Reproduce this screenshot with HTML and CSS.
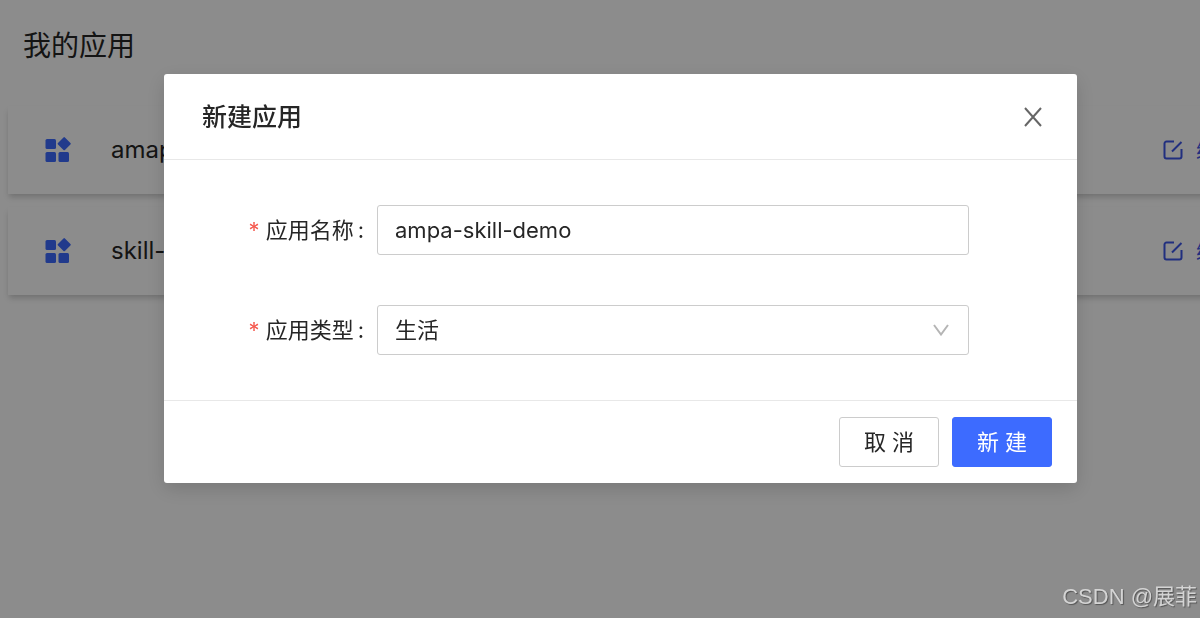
FILE: index.html
```html
<!DOCTYPE html>
<html lang="zh-CN">
<head>
<meta charset="utf-8">
<title>我的应用</title>
<link rel="stylesheet" href="styles.css">
</head>
<body>
<svg class="sprite" aria-hidden="true">
  <symbol id="icon-apps" viewBox="0 0 26 26">
    <rect x="0.500" y="2" width="10.500" height="10" rx="1.500"/>
    <rect x="0.500" y="15" width="10.500" height="10" rx="1.500"/>
    <rect x="13.500" y="15" width="10.500" height="10" rx="1.500"/>
    <rect x="14.300" y="1.800" width="9.800" height="9.800" rx="1" transform="rotate(45 19.200 6.700)"/>
  </symbol>
  <symbol id="icon-edit" viewBox="0 0 20 20">
    <path d="M11 1.500H3.500a2 2 0 0 0-2 2v13a2 2 0 0 0 2 2h13a2 2 0 0 0 2-2V9M9 11.500 18.500 2" fill="none" stroke="currentColor" stroke-width="2"/>
  </symbol>
</svg>
<main class="page">
  <h1 class="page-title">我的应用</h1>
  <ul class="app-list">
    <li class="app-card">
      <svg class="app-icon" aria-hidden="true"><use href="#icon-apps"/></svg>
      <span class="app-name">amap</span>
      <a class="edit-link" href="#"><svg class="edit-icon" aria-hidden="true"><use href="#icon-edit"/></svg>编辑</a>
    </li>
    <li class="app-card">
      <svg class="app-icon" aria-hidden="true"><use href="#icon-apps"/></svg>
      <span class="app-name">skill-</span>
      <a class="edit-link" href="#"><svg class="edit-icon" aria-hidden="true"><use href="#icon-edit"/></svg>编辑</a>
    </li>
  </ul>
</main>
<div class="overlay">
  <form class="modal" role="dialog" aria-labelledby="modal-title">
    <header class="modal-header">
      <h2 class="modal-title" id="modal-title">新建应用</h2>
      <button class="close" type="button" aria-label="关闭">
        <svg class="close-icon" viewBox="0 0 20 20" aria-hidden="true"><path d="M2 1 18 19M18 1 2 19"/></svg>
      </button>
    </header>
    <div class="modal-body">
      <div class="field">
        <label class="label" for="app-name"><span class="required">*</span>应用名称</label>
        <input class="control" id="app-name" type="text" value="ampa-skill-demo">
      </div>
      <div class="field">
        <label class="label" for="app-type"><span class="required">*</span>应用类型</label>
        <div class="select">
          <select class="control" id="app-type"><option>生活</option></select>
          <svg class="chevron" viewBox="0 0 16 12" aria-hidden="true"><path d="M1 1 8 10.500 15 1"/></svg>
        </div>
      </div>
    </div>
    <footer class="modal-footer">
      <button class="button" type="button">取 消</button>
      <button class="button primary" type="submit">新 建</button>
    </footer>
  </form>
</div>
<div class="watermark">CSDN @展菲</div>
</body>
</html>
```
FILE: styles.css
```css
* {
  box-sizing: border-box;
}

body {
  margin: 0;
  background: #fff;
  color: #262626;
  font: 22px/32px Inter, "Noto Sans CJK SC", sans-serif;
}

.sprite {
  display: none;
}

.page {
  min-height: 100vh;
  padding: 28px 0 0 8px;
  overflow: hidden;
}

.page-title {
  margin: 0 0 42px 15px;
  font-size: 28px;
  line-height: 36px;
  font-weight: 400;
}

.app-list {
  display: grid;
  gap: 13px;
  margin: 0 -100px 0 0;
  padding: 0;
  list-style: none;
}

.app-card {
  display: flex;
  align-items: center;
  height: 88px;
  padding: 0 60px 0 37px;
  background: #fff;
  box-shadow: 0 4px 6px -1px rgba(0, 0, 0, 0.2);
  font-size: 24px;
}

.app-icon {
  width: 26px;
  height: 26px;
  margin-right: 40px;
  fill: #3d6bff;
}

.edit-link {
  display: flex;
  align-items: center;
  gap: 13px;
  margin-left: auto;
  color: #3d56e8;
  font-size: 22px;
  text-decoration: none;
}

.edit-icon {
  width: 20px;
  height: 20px;
}

.overlay {
  position: fixed;
  inset: 0;
  padding: 74px 123px 0 164px;
  background: rgba(0, 0, 0, 0.45);
}

.modal {
  border-radius: 3px;
  background: #fff;
  box-shadow: 0 6px 20px rgba(0, 0, 0, 0.15);
}

.modal-header {
  display: flex;
  align-items: center;
  justify-content: space-between;
  height: 86px;
  padding: 0 34px 0 38px;
  border-bottom: 1px solid #e8e8e8;
}

.modal-title {
  margin: 0;
  font-size: 25px;
  font-weight: 500;
}

.close {
  display: flex;
  padding: 0;
  border: 0;
  background: none;
}

.close-icon {
  width: 20px;
  height: 20px;
  fill: none;
  stroke: #666;
  stroke-width: 2;
}

.modal-body {
  display: grid;
  gap: 50px;
  padding: 45px 108px 45px 0;
}

.field {
  display: grid;
  grid-template-columns: 213px 1fr;
  align-items: center;
}

.label {
  padding-right: 13px;
  text-align: right;
}

.label::after {
  content: ":";
  margin-left: 4px;
}

.required {
  margin-right: 6px;
  color: #f5594e;
}

.control {
  appearance: none;
  width: 100%;
  height: 50px;
  padding: 0 17px;
  border: 1px solid #ccc;
  border-radius: 3px;
  background: #fff;
  color: inherit;
  font: inherit;
}

.select {
  display: flex;
  position: relative;
}

.chevron {
  position: absolute;
  top: 19px;
  right: 20px;
  width: 16px;
  height: 12px;
  fill: none;
  stroke: #b5b5b5;
  stroke-width: 2;
  pointer-events: none;
}

.modal-footer {
  display: flex;
  justify-content: flex-end;
  gap: 13px;
  padding: 16px 25px;
  border-top: 1px solid #e8e8e8;
}

.button {
  width: 100px;
  height: 50px;
  padding: 0;
  border: 1px solid #ccc;
  border-radius: 3px;
  background: #fff;
  color: inherit;
  font: inherit;
}

.primary {
  border-color: #3d6bff;
  background: #3d6bff;
  color: #fff;
}

.watermark {
  position: fixed;
  right: 3px;
  bottom: 5px;
  color: #d4d4d4;
  font-family: "Liberation Sans", "Noto Sans CJK SC", sans-serif;
  font-size: 22px;
  text-shadow: 1px 1px 1px rgba(0, 0, 0, 0.4);
}
```
